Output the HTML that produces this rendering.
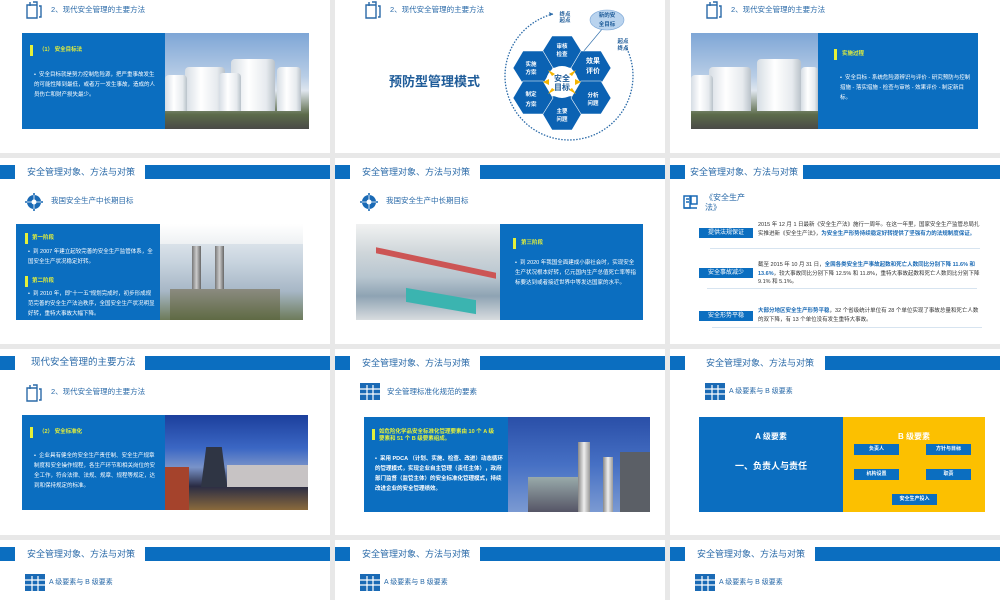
<!DOCTYPE html>
<html><head><meta charset="utf-8"><style>
*{margin:0;padding:0;box-sizing:border-box}
html{width:1000px;height:600px;overflow:hidden}
body{width:1000px;height:600px;background:#e8e8e8;position:relative;overflow:hidden;font-family:"Liberation Sans","Noto Sans CJK SC",sans-serif}
.s{position:absolute;width:330px;height:186px;background:#fff;overflow:hidden}
.s.last{height:60px}
.a{position:absolute}
.lb{position:absolute;left:0;top:7px;width:15px;height:14px;background:#0b6ec0}
.rb{position:absolute;left:145px;top:7px;width:185px;height:14px;background:#0b6ec0}
.ht{position:absolute;left:27px;top:8px;font-size:9px;color:#2a6aa8;white-space:nowrap;line-height:12px}
.sub{position:absolute;top:37px;font-size:7.5px;color:#2a6aa8;white-space:nowrap;line-height:12px}
.blue{position:absolute;background:#0b6ec0}
.yt{position:absolute;font-size:5.5px;font-weight:bold;color:#e4f03a;line-height:7px;white-space:nowrap}
.yb{position:absolute;width:3px;height:11px;background:#e4f03a}
.wt{position:absolute;font-size:5.5px;color:#fff;line-height:10px}
.tank{position:absolute;background:linear-gradient(90deg,#d6dde4,#fff 40%,#e6eaee 80%,#b9c2ca);border-radius:4px 4px 0 0}
</style></head><body>

<!-- Row 1 col 1 -->
<div class="s" style="left:0;top:-33px">
 <svg class="a" style="left:24px;top:33px" width="20" height="20" viewBox="0 0 20 20" fill="none" stroke="#2a6aa8" stroke-width="1.4"><path d="M3 5v13h10V5zM6 2v4M9 2h4v3M15 6h2v11h-2"/></svg>
 <div class="sub" style="left:51px">2、现代安全管理的主要方法</div>
 <div class="blue" style="left:22px;top:66px;width:143px;height:96px"></div>
 <div class="yb" style="left:30px;top:78px"></div><div class="yt" style="left:39px;top:80px">（1） 安全目标法</div>
 <div class="wt" style="left:34px;top:103px;width:125px">•&nbsp; 安全目标就是努力控制危险源，把严重事故发生的可能性降到最低，或者万一发生事故，造成的人员伤亡和财产损失最少。</div>
 <div class="a" style="left:165px;top:66px;width:144px;height:96px;background:linear-gradient(#7ea6d6,#b8cde6 45%,#dfe6ee 60%,#5c6b4a 85%,#4a4a48);overflow:hidden">
  <div class="tank" style="left:20px;top:34px;width:40px;height:44px"></div>
  <div class="tank" style="left:66px;top:26px;width:44px;height:52px"></div>
  <div class="tank" style="left:54px;top:40px;width:22px;height:38px"></div>
  <div class="tank" style="left:112px;top:34px;width:24px;height:44px"></div>
  <div class="tank" style="left:0px;top:42px;width:22px;height:36px"></div>
 </div>
</div>

<!-- Row 1 col 2 -->
<div class="s" style="left:335px;top:-33px">
 <svg class="a" style="left:28px;top:33px" width="20" height="20" viewBox="0 0 20 20" fill="none" stroke="#2a6aa8" stroke-width="1.4"><path d="M3 5v13h10V5zM6 2v4M9 2h4v3M15 6h2v11h-2"/></svg>
 <div class="sub" style="left:55px">2、现代安全管理的主要方法</div>
 <div class="a" style="left:54px;top:104px;font-size:13px;font-weight:bold;color:#1f5c99;white-space:nowrap">预防型管理模式</div>
</div>
<svg class="a" style="left:480px;top:0" width="185" height="152" viewBox="480 0 185 152">
 <path d="M553 14 A64 64 0 1 0 625 45" fill="none" stroke="#2a6aa8" stroke-width="1.3" stroke-dasharray="1.5 1.5"/>
 <path d="M553 14 l-4 -2 l1 4z" fill="#2a6aa8"/>
 <line x1="603" y1="28" x2="583" y2="52" stroke="#2a6aa8" stroke-width="0.6"/>
 <ellipse cx="607" cy="20" rx="17" ry="10" fill="#b9d3ee" stroke="#7aa6d6" stroke-width="0.6"/>
 <text x="607" y="17" font-size="5.5" fill="#1f5c99" text-anchor="middle" font-weight="bold">新的安</text>
 <text x="607" y="26" font-size="5.5" fill="#1f5c99" text-anchor="middle" font-weight="bold">全目标</text>
 <text x="565" y="16" font-size="5.5" fill="#1f5c99" text-anchor="middle" font-weight="bold">终点</text>
 <text x="565" y="22" font-size="5.5" fill="#1f5c99" text-anchor="middle" font-weight="bold">起点</text>
 <text x="623" y="43" font-size="5.5" fill="#1f5c99" text-anchor="middle" font-weight="bold">起点</text>
 <text x="623" y="50" font-size="5.5" fill="#1f5c99" text-anchor="middle" font-weight="bold">终点</text>
 <g fill="#0b62b3" stroke="#fff" stroke-width="0.6">
  <polygon points="552,36 572,36 582,52 572,68 552,68 542,52"/>
  <polygon points="552,96 572,96 582,113 572,130 552,130 542,113"/>
  <polygon points="523,51 543,51 553,68 543,84 523,84 513,68"/>
  <polygon points="581,51 601,51 611,68 601,84 581,84 571,68"/>
  <polygon points="523,81 543,81 553,98 543,114 523,114 513,98"/>
  <polygon points="581,81 601,81 611,98 601,114 581,114 571,98"/>
 </g>
 <circle cx="562" cy="82" r="16" fill="#fff"/>
 <g fill="#f5b400"><path d="M548 70l7 4-3 2z"/><path d="M576 70l-7 4 3 2z"/><path d="M548 94l7-4-3-2z"/><path d="M576 94l-7-4 3-2z"/><path d="M543 82l6-3v6z"/><path d="M581 82l-6-3v6z"/></g>
 <text x="562" y="81" font-size="8" fill="#1f5c99" text-anchor="middle" font-weight="bold">安全</text>
 <text x="562" y="90" font-size="8" fill="#1f5c99" text-anchor="middle" font-weight="bold">目标</text>
 <g fill="#fff" font-size="5.5" text-anchor="middle" font-weight="bold">
  <text x="562" y="48">审核</text><text x="562" y="56">检查</text>
  <text x="562" y="113">主要</text><text x="562" y="121">问题</text>
  <text x="531" y="66">实施</text><text x="531" y="74">方案</text>
  <text x="531" y="96">制定</text><text x="531" y="106">方案</text>
  <text x="593" y="97">分析</text><text x="593" y="105">问题</text>
 </g>
 <text x="593" y="63" font-size="7" fill="#fff" text-anchor="middle" font-weight="bold">效果</text>
 <text x="593" y="73" font-size="7" fill="#fff" text-anchor="middle" font-weight="bold">评价</text>
</svg>

<!-- Row 1 col 3 -->
<div class="s" style="left:670px;top:-33px">
 <svg class="a" style="left:34px;top:33px" width="20" height="20" viewBox="0 0 20 20" fill="none" stroke="#2a6aa8" stroke-width="1.4"><path d="M3 5v13h10V5zM6 2v4M9 2h4v3M15 6h2v11h-2"/></svg>
 <div class="sub" style="left:61px">2、现代安全管理的主要方法</div>
 <div class="a" style="left:21px;top:66px;width:127px;height:96px;background:linear-gradient(#7ea6d6,#b8cde6 45%,#dfe6ee 60%,#5c6b4a 85%,#4a4a48);overflow:hidden">
  <div class="tank" style="left:18px;top:34px;width:42px;height:44px"></div>
  <div class="tank" style="left:66px;top:26px;width:44px;height:52px"></div>
  <div class="tank" style="left:0;top:42px;width:22px;height:36px"></div>
  <div class="tank" style="left:110px;top:34px;width:17px;height:44px"></div>
 </div>
 <div class="blue" style="left:148px;top:66px;width:160px;height:96px"></div>
 <div class="yb" style="left:164px;top:82px"></div><div class="yt" style="left:172px;top:84px">实施过程</div>
 <div class="wt" style="left:170px;top:106px;width:132px">•&nbsp; 安全目标 - 系统危险源辨识与评价 - 研究预防与控制措施 - 落实措施 - 检查与审核 - 效果评价 - 制定新目标。</div>
</div>

<!-- Row 2 col 1 -->
<div class="s" style="left:0;top:158px">
 <div class="lb"></div><div class="ht">安全管理对象、方法与对策</div><div class="rb"></div>
 <svg class="a" style="left:25px;top:35px" width="18" height="18" viewBox="0 0 18 18"><circle cx="9" cy="9" r="7" fill="#1a6ab5"/><path d="M0 9h18M9 0v18" stroke="#1a6ab5" stroke-width="1.6"/><circle cx="9" cy="9" r="2.5" fill="#fff"/><path d="M2 9h14M9 2v14" stroke="#fff" stroke-width="0.8"/></svg>
 <div class="sub" style="left:51px">我国安全生产中长期目标</div>
 <div class="blue" style="left:16px;top:66px;width:144px;height:96px"></div>
 <div class="yb" style="left:25px;top:75px"></div><div class="yt" style="left:32px;top:77px">第一阶段</div>
 <div class="wt" style="left:28px;top:89px;width:128px">•&nbsp; 到 2007 年建立起较完善的安全生产监管体系，全国安全生产状况稳定好转。</div>
 <div class="yb" style="left:25px;top:118px"></div><div class="yt" style="left:32px;top:120px">第二阶段</div>
 <div class="wt" style="left:28px;top:131px;width:128px">•&nbsp; 到 2010 年，即"十一五"规划完成时，初步形成规范完善的安全生产法治秩序，全国安全生产状况明显好转，重特大事故大幅下降。</div>
 <div class="a" style="left:160px;top:66px;width:143px;height:96px;background:linear-gradient(#eef2f5,#c7d3de 40%,#a7b7c6 70%,#6d7b5a);overflow:hidden">
  <div class="a" style="left:0;top:0;width:143px;height:20px;background:linear-gradient(#fff,#eef1f3)"></div>
  <div class="a" style="left:32px;top:22px;width:9px;height:66px;background:linear-gradient(90deg,#777,#ccc,#666)"></div>
  <div class="a" style="left:55px;top:22px;width:9px;height:66px;background:linear-gradient(90deg,#777,#ccc,#666)"></div>
  <div class="a" style="left:10px;top:65px;width:110px;height:31px;background:linear-gradient(#8b8b80,#5f6a44)"></div>
 </div>
</div>

<!-- Row 2 col 2 -->
<div class="s" style="left:335px;top:158px">
 <div class="lb"></div><div class="ht">安全管理对象、方法与对策</div><div class="rb"></div>
 <svg class="a" style="left:25px;top:35px" width="18" height="18" viewBox="0 0 18 18"><circle cx="9" cy="9" r="7" fill="#1a6ab5"/><path d="M0 9h18M9 0v18" stroke="#1a6ab5" stroke-width="1.6"/><circle cx="9" cy="9" r="2.5" fill="#fff"/><path d="M2 9h14M9 2v14" stroke="#fff" stroke-width="0.8"/></svg>
 <div class="sub" style="left:51px">我国安全生产中长期目标</div>
 <div class="a" style="left:21px;top:66px;width:144px;height:96px;background:linear-gradient(#f1f2f2,#cfd6da 30%,#b8c6d0 55%,#8ea3b3 75%,#d8dcdf);overflow:hidden">
  <div class="a" style="left:20px;top:36px;width:120px;height:6px;background:#c55;transform:skewY(12deg)"></div>
  <div class="a" style="left:50px;top:70px;width:70px;height:14px;background:#3bb4b0;transform:skewY(10deg)"></div>
 </div>
 <div class="blue" style="left:165px;top:66px;width:143px;height:96px"></div>
 <div class="yb" style="left:178px;top:80px"></div><div class="yt" style="left:186px;top:82px">第三阶段</div>
 <div class="wt" style="left:180px;top:100px;width:124px">•&nbsp; 到 2020 年我国全面建成小康社会时，实现安全生产状况根本好转，亿元国内生产总值死亡率等指标要达到或者接近世界中等发达国家的水平。</div>
</div>

<!-- Row 2 col 3 -->
<div class="s" style="left:670px;top:158px">
 <div class="lb"></div><div class="ht" style="left:20px">安全管理对象、方法与对策</div><div class="rb" style="left:133px;width:197px"></div>
 <svg class="a" style="left:13px;top:36px" width="16" height="16" viewBox="0 0 16 16" fill="none" stroke="#1a6ab5" stroke-width="1.5"><rect x="1" y="2" width="6" height="12"/><rect x="8" y="2" width="6" height="8"/><path d="M3 5h3M3 8h3M1 14h13"/></svg>
 <div class="a" style="left:35px;top:35px;font-size:8px;color:#2a6aa8;line-height:10px">《安全生产<br>法》</div>
 <div class="blue" style="left:29px;top:70px;width:54px;height:10px;font-size:6px;color:#fff;text-align:center;line-height:10px">提供法规保证</div>
 <div class="a" style="left:88px;top:63px;width:222px;font-size:5.5px;color:#333;line-height:8.5px">2015 年 12 月 1 日最新《安全生产法》施行一周年。在这一年里，国家安全生产监管总局扎实推进新《安全生产法》，<b style="color:#1a6ab5">为安全生产形势持续稳定好转提供了坚强有力的法规制度保证。</b></div>
 <div class="a" style="left:40px;top:90px;width:270px;height:1px;background:#d7e4f0"></div>
 <div class="blue" style="left:29px;top:110px;width:54px;height:10px;font-size:6px;color:#fff;text-align:center;line-height:10px">安全事故减少</div>
 <div class="a" style="left:88px;top:103px;width:222px;font-size:5.5px;color:#333;line-height:8.5px">截至 2015 年 10 月 31 日，<b style="color:#1a6ab5">全国各类安全生产事故起数和死亡人数同比分别下降 11.6% 和 13.6%</b>，较大事故同比分别下降 12.5% 和 11.8%，重特大事故起数和死亡人数同比分别下降 9.1% 和 5.1%。</div>
 <div class="a" style="left:37px;top:130px;width:270px;height:1px;background:#d7e4f0"></div>
 <div class="blue" style="left:29px;top:153px;width:54px;height:10px;font-size:6px;color:#fff;text-align:center;line-height:10px">安全形势平稳</div>
 <div class="a" style="left:88px;top:149px;width:222px;font-size:5.5px;color:#333;line-height:8.5px"><b style="color:#1a6ab5">大部分地区安全生产形势平稳</b>，32 个省级统计单位有 28 个单位实现了事故总量和死亡人数的双下降，有 13 个单位没有发生重特大事故。</div>
 <div class="a" style="left:42px;top:169px;width:270px;height:1px;background:#d7e4f0"></div>
</div>

<!-- Row 3 col 1 -->
<div class="s" style="left:0;top:349px">
 <div class="lb"></div><div class="ht" style="left:31px;font-size:9.5px">现代安全管理的主要方法</div><div class="rb"></div>
 <svg class="a" style="left:24px;top:34px" width="20" height="20" viewBox="0 0 20 20" fill="none" stroke="#2a6aa8" stroke-width="1.4"><path d="M3 5v13h10V5zM6 2v4M9 2h4v3M15 6h2v11h-2"/></svg>
 <div class="sub" style="left:51px;top:37px">2、现代安全管理的主要方法</div>
 <div class="blue" style="left:22px;top:66px;width:143px;height:95px"></div>
 <div class="yb" style="left:30px;top:78px"></div><div class="yt" style="left:39px;top:80px">（2） 安全标准化</div>
 <div class="wt" style="left:34px;top:102px;width:125px">•&nbsp; 企业具有健全的安全生产责任制、安全生产规章制度和安全操作规程，各生产环节和相关岗位的安全工作，符合法律、法规、规章、规程等规定，达到和保持规定的标准。</div>
 <div class="a" style="left:165px;top:66px;width:143px;height:95px;background:linear-gradient(#1c3f9c,#3b67c4 35%,#7993c9 55%,#2a2c44 75%,#8a6a3c);overflow:hidden">
  <div class="a" style="left:36px;top:32px;width:26px;height:40px;background:#2f3544;clip-path:polygon(20% 0,80% 0,100% 100%,0 100%)"></div>
  <div class="a" style="left:0;top:52px;width:24px;height:43px;background:#a5432c"></div>
  <div class="a" style="left:62px;top:50px;width:81px;height:22px;background:#c7c3c4"></div>
 </div>
</div>

<!-- Row 3 col 2 -->
<div class="s" style="left:335px;top:349px">
 <div class="lb"></div><div class="ht">安全管理对象、方法与对策</div><div class="rb"></div>
 <svg class="a" style="left:25px;top:34px" width="20" height="17" viewBox="0 0 20 17"><rect width="20" height="17" fill="#1a6ab5"/><path d="M0 6h20M0 11h20M7 2v15M13 2v15" stroke="#fff" stroke-width="1.2"/></svg>
 <div class="sub" style="left:52px;top:37px">安全管理标准化规范的要素</div>
 <div class="blue" style="left:29px;top:68px;width:144px;height:95px"></div>
 <div class="yb" style="left:37px;top:80px"></div><div class="yt" style="left:44px;top:80px;white-space:normal;width:120px">如危险化学品安全标准化管理要素由 10 个 A 级要素和 51 个 B 级要素组成。</div>
 <div class="wt" style="left:40px;top:105px;width:128px;font-weight:bold">•&nbsp; 采用 PDCA （计划、实施、检查、改进）动态循环的管理模式，实现企业自主管理（责任主体），政府部门监督（监管主体）的安全标准化管理模式，持续改进企业的安全管理绩效。</div>
 <div class="a" style="left:173px;top:68px;width:142px;height:95px;background:linear-gradient(#2a4fa8,#4670c4 50%,#7b9ad2);overflow:hidden">
  <div class="a" style="left:70px;top:25px;width:12px;height:70px;background:linear-gradient(90deg,#888,#eee,#999)"></div>
  <div class="a" style="left:95px;top:40px;width:10px;height:55px;background:linear-gradient(90deg,#888,#eee,#999)"></div>
  <div class="a" style="left:112px;top:35px;width:30px;height:60px;background:#5b5f66"></div>
  <div class="a" style="left:20px;top:60px;width:50px;height:35px;background:linear-gradient(#9aa,#556)"></div>
 </div>
</div>

<!-- Row 3 col 3 -->
<div class="s" style="left:670px;top:349px">
 <div class="lb"></div><div class="ht" style="left:36px">安全管理对象、方法与对策</div><div class="rb" style="left:155px;width:175px"></div>
 <svg class="a" style="left:35px;top:34px" width="20" height="17" viewBox="0 0 20 17"><rect width="20" height="17" fill="#1a6ab5"/><path d="M0 6h20M0 11h20M7 2v15M13 2v15" stroke="#fff" stroke-width="1.2"/></svg>
 <div class="sub" style="left:59px;top:37px;font-size:7px">A 级要素与 B 级要素</div>
 <div class="blue" style="left:29px;top:68px;width:144px;height:95px"></div>
 <div class="a" style="left:29px;top:82px;width:144px;text-align:center;font-size:8px;font-weight:bold;color:#fff">A 级要素</div>
 <div class="a" style="left:29px;top:110px;width:144px;text-align:center;font-size:9px;font-weight:bold;color:#fff">一、负责人与责任</div>
 <div class="a" style="left:173px;top:68px;width:142px;height:95px;background:#fcc000"></div>
 <div class="a" style="left:173px;top:82px;width:142px;text-align:center;font-size:8px;font-weight:bold;color:#fff">B 级要素</div>
 <div class="blue" style="left:184px;top:95px;width:45px;height:11px;font-size:5px;color:#fff;text-align:center;line-height:11px;font-weight:bold">负责人</div>
 <div class="blue" style="left:256px;top:95px;width:45px;height:11px;font-size:5px;color:#fff;text-align:center;line-height:11px;font-weight:bold">方针与目标</div>
 <div class="blue" style="left:184px;top:120px;width:45px;height:11px;font-size:5px;color:#fff;text-align:center;line-height:11px;font-weight:bold">机构设置</div>
 <div class="blue" style="left:256px;top:120px;width:45px;height:11px;font-size:5px;color:#fff;text-align:center;line-height:11px;font-weight:bold">职责</div>
 <div class="blue" style="left:222px;top:145px;width:45px;height:11px;font-size:5px;color:#fff;text-align:center;line-height:11px;font-weight:bold">安全生产投入</div>
</div>

<!-- Row 4 -->
<div class="s last" style="left:0;top:540px">
 <div class="lb"></div><div class="ht">安全管理对象、方法与对策</div><div class="rb"></div>
 <svg class="a" style="left:25px;top:34px" width="20" height="17" viewBox="0 0 20 17"><rect width="20" height="17" fill="#1a6ab5"/><path d="M0 6h20M0 11h20M7 2v15M13 2v15" stroke="#fff" stroke-width="1.2"/></svg>
 <div class="sub" style="left:49px;top:37px;font-size:7px">A 级要素与 B 级要素</div>
</div>
<div class="s last" style="left:335px;top:540px">
 <div class="lb"></div><div class="ht">安全管理对象、方法与对策</div><div class="rb"></div>
 <svg class="a" style="left:25px;top:34px" width="20" height="17" viewBox="0 0 20 17"><rect width="20" height="17" fill="#1a6ab5"/><path d="M0 6h20M0 11h20M7 2v15M13 2v15" stroke="#fff" stroke-width="1.2"/></svg>
 <div class="sub" style="left:49px;top:37px;font-size:7px">A 级要素与 B 级要素</div>
</div>
<div class="s last" style="left:670px;top:540px">
 <div class="lb"></div><div class="ht">安全管理对象、方法与对策</div><div class="rb"></div>
 <svg class="a" style="left:25px;top:34px" width="20" height="17" viewBox="0 0 20 17"><rect width="20" height="17" fill="#1a6ab5"/><path d="M0 6h20M0 11h20M7 2v15M13 2v15" stroke="#fff" stroke-width="1.2"/></svg>
 <div class="sub" style="left:49px;top:37px;font-size:7px">A 级要素与 B 级要素</div>
</div>
</body></html>
